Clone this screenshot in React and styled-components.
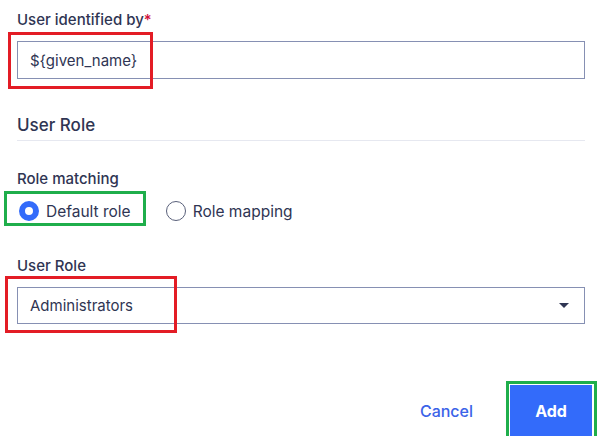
import React from "react";
import styled, { createGlobalStyle } from "styled-components";

const Global = createGlobalStyle`
	html, body {
		margin: 0;
		background: #fff;
	}
	body {
		font-family: Inter, Roboto, "Liberation Sans", sans-serif;
		color: #2f3553;
	}
`;

const Form = styled.div`
	width: 568px;
	padding: 10px 0 0 17px;
	display: flex;
	flex-direction: column;
`;

const Label = styled.div`
	font-size: 15px;
	font-weight: 500;
	line-height: 20px;
	color: #2f3553;
	margin-top: ${props => props.top || 0}px;

	span {
		color: #d0103a;
	}
`;

const Field = styled.div`
	position: relative;
	margin-top: ${props => props.top || 0}px;
`;

const Input = styled.div`
	box-sizing: border-box;
	height: ${props => props.h || 38}px;
	border: 1px solid #8690b3;
	display: flex;
	align-items: center;
	justify-content: space-between;
	padding: 0 15px 0 12px;
	font-size: 15px;
	color: #2f3553;
`;

const Caret = styled.div`
	width: 0;
	height: 0;
	border-left: 5px solid transparent;
	border-right: 5px solid transparent;
	border-top: 5px solid #2f3553;
`;

const Heading = styled.div`
	margin-top: 34px;
	font-size: 17px;
	font-weight: 500;
	line-height: 24px;
	padding-bottom: 3px;
	border-bottom: 1px solid #e6e8f0;
`;

const RadioRow = styled.div`
	display: flex;
	align-items: center;
	gap: 33px;
	margin-top: 9px;
	height: 26px;
`;

const Option = styled.label`
	position: relative;
	display: flex;
	align-items: center;
	gap: 7px;
	font-size: 15.5px;
	color: #2f3553;
`;

const Dot = styled.span`
	box-sizing: border-box;
	width: 20px;
	height: 20px;
	border-radius: 50%;
	margin-left: 2px;
	border: ${props => (props.checked ? "6px solid #336bfa" : "1.5px solid #59607a")};
	background: #fff;
`;

const Mark = styled.div`
	position: absolute;
	box-sizing: border-box;
	border: 3px solid ${props => (props.color === "green" ? "#1fae4b" : "#e31c25")};
	left: ${props => props.l}px;
	top: ${props => props.t}px;
	width: ${props => props.w}px;
	height: ${props => props.h}px;
	pointer-events: none;
`;

const Footer = styled.div`
	display: flex;
	justify-content: flex-end;
	align-items: center;
	gap: 37px;
	margin-top: 61px;
	margin-right: -7px;
`;

const LinkButton = styled.button`
	border: none;
	background: none;
	padding: 0;
	font-family: inherit;
	font-size: 16px;
	font-weight: 500;
	color: #3b63e8;
`;

const Primary = styled.button`
	position: relative;
	width: 82px;
	height: 51px;
	border: none;
	background: #336bfa;
	color: #fff;
	font-family: inherit;
	font-size: 16px;
	font-weight: 700;
`;

export default function App() {
	return (
		<>
			<Global />
			<Form>
				<Label>
					User identified by<span>*</span>
				</Label>
				<Field top={11}>
					<Input>{"${given_name}"}</Input>
					<Mark l={-9} t={-9} w={145} h={57} />
				</Field>
				<Heading>User Role</Heading>
				<Label top={28}>Role matching</Label>
				<RadioRow>
					<Option>
						<Dot checked />
						Default role
						<Mark color="green" l={-13} t={-10} w={142} h={35} />
					</Option>
					<Option>
						<Dot />
						Role mapping
					</Option>
				</RadioRow>
				<Label top={32}>User Role</Label>
				<Field top={11}>
					<Input h={37}>
						Administrators
						<Caret />
					</Input>
					<Mark l={-12} t={-11} w={172} h={57} />
				</Field>
				<Footer>
					<LinkButton>Cancel</LinkButton>
					<Primary>
						Add
						<Mark color="green" l={-4} t={-4} w={91} h={59} />
					</Primary>
				</Footer>
			</Form>
		</>
	);
}
